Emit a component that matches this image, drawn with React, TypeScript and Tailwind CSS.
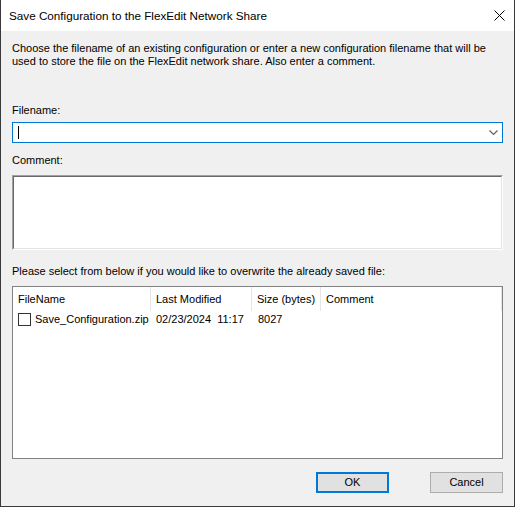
import React from "react";

const font = { fontFamily: '"Liberation Sans", Arial, sans-serif' };

function CloseIcon() {
  return (
    <svg width="11" height="11" viewBox="0 0 11 11" className="block">
      <path d="M0.5 0.5 L10.5 10.5 M10.5 0.5 L0.5 10.5" stroke="#000" strokeWidth="1" fill="none" />
    </svg>
  );
}

function Chevron() {
  return (
    <svg width="9" height="6" viewBox="0 0 9 6" className="block">
      <path d="M0.5 0.5 L4.5 4.5 L8.5 0.5" stroke="#606060" strokeWidth="1.2" fill="none" />
    </svg>
  );
}

const columns = [
  { label: "FileName", width: "w-[138px]" },
  { label: "Last Modified", width: "w-[101px]" },
  { label: "Size (bytes)", width: "w-[69px]" },
  { label: "Comment", width: "w-[181px]" },
];

export default function App() {
  return (
    <div
      className="w-[515px] h-[507px] flex flex-col bg-[#f0f0f0] border border-t-0 border-[#3a3a3a] text-[11px] text-black overflow-hidden whitespace-nowrap"
      style={font}
    >
      {/* title bar */}
      <div className="h-[31px] shrink-0 bg-white flex items-center justify-between pl-[8px] pr-[9px]">
        <span className="text-[11.7px] leading-[13px]">Save Configuration to the FlexEdit Network Share</span>
        <CloseIcon />
      </div>

      <div className="flex flex-col px-[11px]">
        <p className="pt-[11px] leading-[13px]">
          Choose the filename of an existing configuration or enter a new configuration filename that will be
          <br />
          used to store the file on the FlexEdit network share. Also enter a comment.
        </p>

        <label className="mt-[36px] leading-[13px] block">Filename:</label>
        <div className="mt-[5px] h-[21px] bg-white border border-[#0078d7] flex items-center justify-between pl-[5px] pr-[4px]">
          <span className="w-px h-[13px] bg-black" />
          <Chevron />
        </div>

        <label className="mt-[11px] leading-[13px] block">Comment:</label>
        <div className="mt-[8px] h-[75px] border border-t-[#a0a0a0] border-l-[#a0a0a0] border-r-white border-b-white">
          <div className="h-full bg-white border border-t-[#696969] border-l-[#696969] border-r-[#e3e3e3] border-b-[#e3e3e3]" />
        </div>

        <p className="mt-[15px] leading-[13px]">
          Please select from below if you would like to overwrite the already saved file:
        </p>
        <div className="mt-[8px] h-[173px] bg-white border border-[#828282]">
          <div className="flex h-[24px]">
            {columns.map((c) => (
              <div
                key={c.label}
                className={`${c.width} shrink-0 flex items-center pl-[5px] border-r border-[#e5e5e5]`}
              >
                {c.label}
              </div>
            ))}
          </div>
          <div className="flex h-[17px] items-center">
            <div className="w-[138px] shrink-0 flex items-center pl-[5px] gap-[4px]">
              <span className="w-[13px] h-[13px] border border-[#333] bg-white shrink-0" />
              <span>Save_Configuration.zip</span>
            </div>
            <div className="w-[101px] shrink-0 pl-[5px] whitespace-pre">02/23/2024  11:17</div>
            <div className="w-[69px] shrink-0 pl-[6px]">8027</div>
          </div>
        </div>

        <div className="mt-[13px] flex justify-end gap-[41px]">
          <button className="w-[73px] h-[21px] bg-[#e1e1e1] border-2 border-[#0078d7] leading-none">OK</button>
          <button className="w-[73px] h-[21px] bg-[#e1e1e1] border border-[#adadad] leading-none">Cancel</button>
        </div>
      </div>
    </div>
  );
}
